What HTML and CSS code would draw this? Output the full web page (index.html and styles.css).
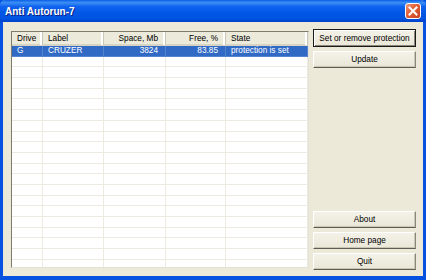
FILE: index.html
```html
<!DOCTYPE html>
<html lang="en">
<head>
  <meta charset="UTF-8">
  <title>Anti Autorun-7</title>
  <link rel="stylesheet" href="styles.css">
</head>
<body>
  <div class="window">
    <div class="titlebar">
      <span class="title">Anti Autorun-7</span>
      <span class="close">
        <svg width="10" height="10" viewBox="0 0 10 10">
          <path d="M1.5 1.5 L8.5 8.5 M8.5 1.5 L1.5 8.5" stroke="#fff" stroke-width="2" stroke-linecap="square"/>
        </svg>
      </span>
    </div>

    <div class="client">
      <div class="list">
        <div class="head">
          <span>Drive</span>
          <span>Label</span>
          <span class="num">Space, Mb</span>
          <span class="num">Free, %</span>
          <span>State</span>
        </div>
        <div class="row selected">
          <span>G</span>
          <span>CRUZER</span>
          <span class="num">3824</span>
          <span class="num">83.85</span>
          <span>protection is set</span>
        </div>
        <div class="row"><span></span><span></span><span></span><span></span><span></span></div>
        <div class="row"><span></span><span></span><span></span><span></span><span></span></div>
        <div class="row"><span></span><span></span><span></span><span></span><span></span></div>
        <div class="row"><span></span><span></span><span></span><span></span><span></span></div>
        <div class="row"><span></span><span></span><span></span><span></span><span></span></div>
        <div class="row"><span></span><span></span><span></span><span></span><span></span></div>
        <div class="row"><span></span><span></span><span></span><span></span><span></span></div>
        <div class="row"><span></span><span></span><span></span><span></span><span></span></div>
        <div class="row"><span></span><span></span><span></span><span></span><span></span></div>
        <div class="row"><span></span><span></span><span></span><span></span><span></span></div>
        <div class="row"><span></span><span></span><span></span><span></span><span></span></div>
        <div class="row"><span></span><span></span><span></span><span></span><span></span></div>
        <div class="row"><span></span><span></span><span></span><span></span><span></span></div>
        <div class="row"><span></span><span></span><span></span><span></span><span></span></div>
        <div class="row"><span></span><span></span><span></span><span></span><span></span></div>
        <div class="row"><span></span><span></span><span></span><span></span><span></span></div>
        <div class="row"><span></span><span></span><span></span><span></span><span></span></div>
        <div class="row"><span></span><span></span><span></span><span></span><span></span></div>
        <div class="row"><span></span><span></span><span></span><span></span><span></span></div>
        <div class="row"><span></span><span></span><span></span><span></span><span></span></div>
        <div class="row"><span></span><span></span><span></span><span></span><span></span></div>
      </div>

      <div class="buttons">
        <div class="group">
          <button class="btn default">Set or remove protection</button>
          <button class="btn">Update</button>
        </div>
        <div class="group">
          <button class="btn">About</button>
          <button class="btn">Home page</button>
          <button class="btn">Quit</button>
        </div>
      </div>
    </div>
  </div>
</body>
</html>
```

FILE: styles.css
```css
body {
  margin: 0;
  font-family: "Liberation Sans", Arial, sans-serif;
  font-size: 8.25px;
  color: #000;
}

.window {
  width: 426px;
  height: 280px;
  box-sizing: border-box;
  border: 3px solid #0552E0;
  border-top: none;
  border-bottom-width: 4px;
  background: #ECE9D8;
  display: flex;
  flex-direction: column;
}

.titlebar {
  height: 22px;
  margin: 0 -3px;
  padding: 0 5px 0 5px;
  display: flex;
  align-items: center;
  justify-content: space-between;
  background: linear-gradient(#0A5FE6 0%, #3D8FF6 12%, #0F62EE 30%, #0057E5 60%, #0053E0 85%, #0041C8 100%);
  border-radius: 5px 5px 0 0;
}

.title {
  font-weight: bold;
  font-size: 10px;
  color: #fff;
  text-shadow: 1px 1px 0 #0A1E80;
}

.close {
  width: 16px;
  height: 16px;
  box-sizing: border-box;
  border: 1px solid #fff;
  border-radius: 3px;
  background: linear-gradient(135deg, #F09A7A 0%, #E2633C 40%, #C7401C 100%);
  display: flex;
  align-items: center;
  justify-content: center;
}

.close svg {
  display: block;
}

.client {
  flex: 1;
  display: flex;
  gap: 4px;
  padding: 7px 7px 6px 8px;
  min-height: 0;
}

.list {
  width: 298px;
  margin: 2px 0;
  box-sizing: border-box;
  border: 1px solid;
  border-color: #7F7C6E #E4E2D6 #E4E2D6 #7F7C6E;
  background: #fff;
  overflow: hidden;
}

.head,
.row {
  display: grid;
  grid-template-columns: 31px 61px 62px 60px 82px;
}

.head {
  height: 14px;
  box-sizing: border-box;
  background: #EBEADB;
  border-bottom: 2px solid #D8D4C4;
}

.head span {
  padding: 1px 5px 0;
  line-height: 12px;
  border-right: 1px solid #CBC7B8;
  box-shadow: inset -2px 0 0 #fff;
}

.row {
  height: 10.7px;
}

.row span {
  padding: 0 5px;
  line-height: 10px;
  box-sizing: border-box;
  border-right: 1px solid #ECEAE1;
  border-bottom: 1px solid #ECEAE1;
  white-space: nowrap;
}

.head .num,
.row .num {
  text-align: right;
  padding-right: 7px;
}

.row.selected span {
  background: #316AC5;
  color: #fff;
  border-color: #5483CF;
}

.buttons {
  flex: 1;
  display: flex;
  flex-direction: column;
  justify-content: space-between;
}

.group {
  display: flex;
  flex-direction: column;
  gap: 4px;
}

.btn {
  height: 17px;
  margin: 0;
  padding: 0;
  font-family: inherit;
  font-size: 8.25px;
  color: #000;
  background: linear-gradient(#F4F2E8, #EAE7D8);
  border: 1px solid;
  border-color: #FFFFFF #8A877A #5F5D52 #FFFFFF;
  box-shadow: inset -1px -1px 0 #C9C6B6;
}

.btn.default {
  height: 18px;
  border: 1px solid #1A1A1A;
  box-shadow: inset 1px 1px 0 #fff, inset -1px -1px 0 #8A877A;
}
```
